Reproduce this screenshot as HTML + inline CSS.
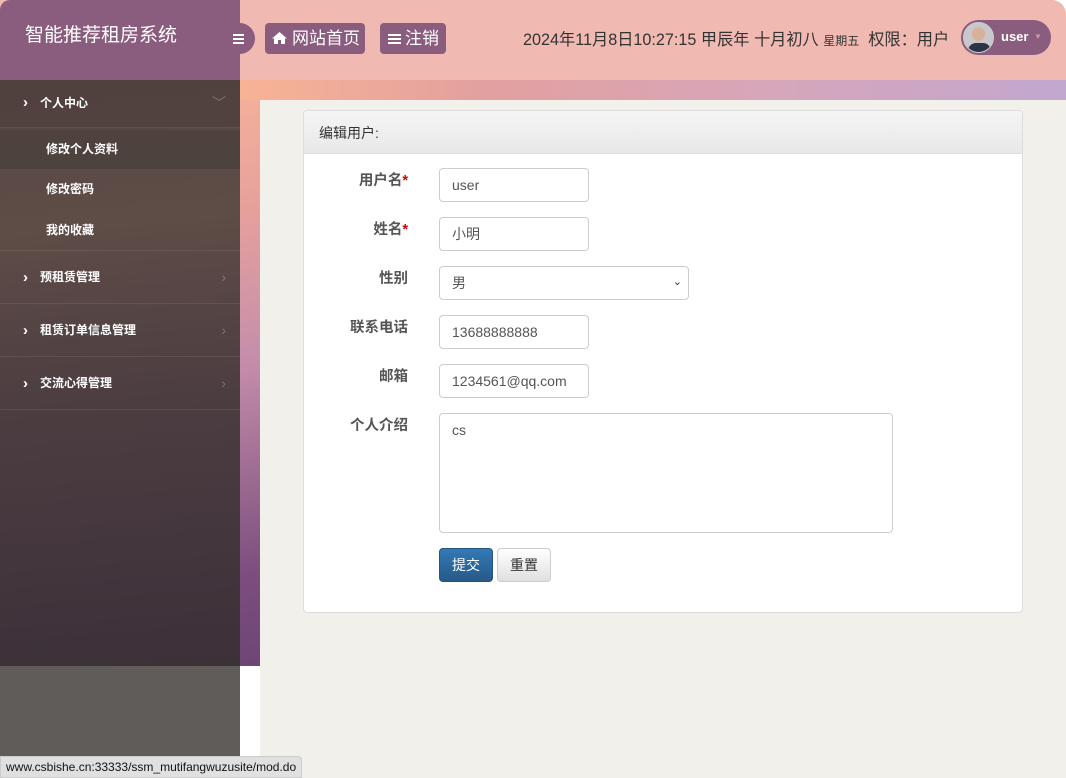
<!DOCTYPE html>
<html><head><meta charset="utf-8"><style>
*{box-sizing:border-box;margin:0;padding:0}
body{width:1066px;height:778px;overflow:hidden;position:relative;font-family:"Liberation Sans","Noto Sans CJK SC",sans-serif;background:#fff}
.bg{position:absolute;left:0;top:80px;width:1066px;height:586px;background:linear-gradient(170deg,#f9b898 0%,#e7a19c 22%,#c48eab 42%,#7a4d7c 70%,#5a3a6c 100%)}
.bgtop{position:absolute;left:240px;top:80px;width:826px;height:20px;background:linear-gradient(90deg,#f8b395 0%,#e2a09f 30%,#d6a6bb 65%,#c2a7cf 100%)}
.header{position:absolute;left:0;top:0;width:1066px;height:80px;background:#f0b9b1;border-top-right-radius:14px}
.logo{position:absolute;left:0;top:0;width:240px;height:80px;background:#8a5c7d;border-top-left-radius:10px;color:#fff;font-size:19px;padding:20px 0 0 25px}
.tog{position:absolute;left:224px;top:23px;width:31px;height:31px;border-radius:50%;background:#8a5c7d}
.bars{position:absolute;width:11px;height:10px;border-top:2px solid #fff;border-bottom:2px solid #fff}
.bars:after{content:"";position:absolute;left:0;top:2px;width:100%;height:2px;background:#fff}
.btn{position:absolute;top:23px;height:31px;background:#8a5c7d;color:#fff;border-radius:4px;font-size:17px;line-height:31px}
.time{position:absolute;left:523px;top:26px;font-size:16.2px;color:#333;white-space:nowrap}
.user{position:absolute;left:961px;top:20px;width:90px;height:35px;background:#8a5c7d;border-radius:18px}
.av{position:absolute;left:2px;top:2px;width:31px;height:31px;border-radius:50%;background:radial-gradient(circle at 50% 38%,#d9b09a 0 28%,#c7c7cc 30% 100%);overflow:hidden;border:1px solid #ccc}
.av:after{content:"";position:absolute;left:4px;top:20px;width:23px;height:14px;background:#2d3348;border-radius:8px 8px 0 0}
.side{position:absolute;left:0;top:80px;width:240px;height:586px;background:linear-gradient(175deg,#574644 0%,#5e4c47 25%,#4c3d41 55%,#3c3039 100%)}
.side2{position:absolute;left:0;top:666px;width:240px;height:112px;background:#605c5a}
.white{position:absolute;left:240px;top:666px;width:20px;height:112px;background:#fff}
.mi{position:absolute;left:0;width:240px;color:#fff;font-size:12px;font-weight:bold;border-bottom:1px solid rgba(255,255,255,.08)}
.mi .a{position:absolute;left:23px;font-size:15px;font-weight:bold}
.mi .r{position:absolute;right:14px;color:rgba(255,255,255,.25);font-weight:normal;font-size:14px}
.content{position:absolute;left:260px;top:100px;width:806px;height:678px;background:#f1f0eb}
.panel{position:absolute;left:303px;top:110px;width:720px;height:503px;background:#fff;border:1px solid #ddd;border-radius:4px}
.ph{height:43px;background:linear-gradient(#f5f5f5,#e8e8e8);border-bottom:1px solid #ddd;font-size:14px;color:#333;padding:12px 15px;border-radius:4px 4px 0 0}
.lab{position:absolute;right:614px;font-size:14.5px;font-weight:bold;color:#555;text-align:right}
.lab i{color:#c00;font-style:normal}
.inp{position:absolute;left:135px;height:34px;border:1px solid #ccc;border-radius:4px;font-size:14px;color:#555;padding:8px 12px;line-height:16px}
.status{position:absolute;left:0;top:756px;height:22px;background:#e0e0e0;border:1px solid #ccc;border-top-right-radius:4px;font-size:12px;color:#111;padding:3px 5px}
</style></head><body>
<div class="bg"></div><div class="bgtop"></div>
<div class="header"></div>
<div class="logo">智能推荐租房系统</div>
<div class="tog"><div class="bars" style="left:9px;top:11px"></div></div>
<div class="btn" style="left:265px;width:100px;padding-left:27px"><svg style="position:absolute;left:7px;top:9px" width="15" height="12" viewBox="0 0 15 12"><path d="M7.5 0L0 6.5h2V12h4V8h3v4h4V6.5h2z" fill="#fff"/></svg>网站首页</div>
<div class="btn" style="left:380px;width:66px;padding-left:25px"><div class="bars" style="left:8px;top:11px;width:13px"></div>注销</div>
<div class="time">2024年11月8日10:27:15 甲辰年 十月初八 <span style="font-size:12px">星期五</span>&nbsp; 权限：用户</div>
<div class="user"><div class="av"></div><span style="position:absolute;left:40px;top:9px;color:#fff;font-size:13px;font-weight:bold">user</span><span style="position:absolute;left:73px;top:12px;color:#c9a;font-size:8px">▼</span></div>
<div class="side"></div>
<div class="mi" style="top:80px;height:48px;line-height:46px;background:rgba(0,0,0,.08)"><span class="a">›</span><span style="position:absolute;left:40px">个人中心</span><span class="r">﹀</span></div>
<div class="mi" style="top:130px;height:39px;line-height:38px;background:#4e423f;border:none"><span style="position:absolute;left:46px">修改个人资料</span></div>
<div class="mi" style="top:169px;height:41px;line-height:40px;border:none"><span style="position:absolute;left:46px">修改密码</span></div>
<div class="mi" style="top:210px;height:41px;line-height:40px"><span style="position:absolute;left:46px">我的收藏</span></div>
<div class="mi" style="top:251px;height:53px;line-height:53px"><span class="a">›</span><span style="position:absolute;left:40px">预租赁管理</span><span class="r">›</span></div>
<div class="mi" style="top:304px;height:53px;line-height:53px"><span class="a">›</span><span style="position:absolute;left:40px">租赁订单信息管理</span><span class="r">›</span></div>
<div class="mi" style="top:357px;height:53px;line-height:53px"><span class="a">›</span><span style="position:absolute;left:40px">交流心得管理</span><span class="r">›</span></div>
<div class="side2"></div><div class="white"></div>
<div class="content"></div>
<div class="panel">
<div class="ph">编辑用户:</div>
<div class="lab" style="top:58px">用户名<i>*</i></div><div class="inp" style="top:57px;width:150px">user</div>
<div class="lab" style="top:107px">姓名<i>*</i></div><div class="inp" style="top:106px;width:150px">小明</div>
<div class="lab" style="top:156px">性别</div><div class="inp" style="top:155px;width:250px">男<span style="position:absolute;right:6px;top:7px;font-size:11px;color:#333">⌄</span></div>
<div class="lab" style="top:205px">联系电话</div><div class="inp" style="top:204px;width:150px">13688888888</div>
<div class="lab" style="top:254px">邮箱</div><div class="inp" style="top:253px;width:150px">1234561@qq.com</div>
<div class="lab" style="top:303px">个人介绍</div><div class="inp" style="top:302px;width:454px;height:120px">cs</div>
<div style="position:absolute;left:135px;top:437px;width:54px;height:34px;background:linear-gradient(#337ab7,#265a88);border:1px solid #245580;border-radius:4px;color:#fff;font-size:14px;text-align:center;line-height:32px">提交</div>
<div style="position:absolute;left:193px;top:437px;width:54px;height:34px;background:linear-gradient(#fff,#e0e0e0);border:1px solid #ccc;border-radius:4px;color:#333;font-size:14px;text-align:center;line-height:32px">重置</div>
</div>
<div class="status">www.csbishe.cn:33333/ssm_mutifangwuzusite/mod.do</div>
</body></html>
